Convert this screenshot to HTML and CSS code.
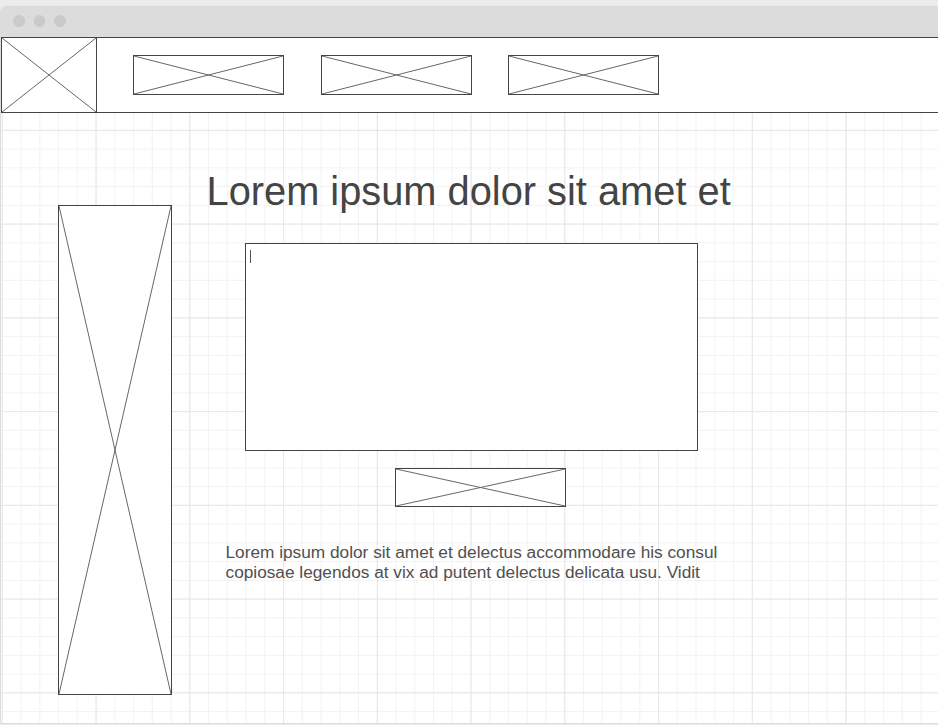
FILE: index.html
```html
<!DOCTYPE html>
<html lang="en">
<head>
<meta charset="utf-8">
<title>Wireframe</title>
<link rel="stylesheet" href="styles.css">
</head>
<body>
<div class="window">
  <div class="chrome">
    <span class="dot"></span>
    <span class="dot"></span>
    <span class="dot"></span>
  </div>
  <header class="header">
    <div class="ph logo">
      <svg class="x" viewBox="0 0 100 100" preserveAspectRatio="none"><line x1="0" y1="0" x2="100" y2="100"/><line x1="100" y1="0" x2="0" y2="100"/></svg>
    </div>
    <nav class="nav">
      <div class="ph navbox"><svg class="x" viewBox="0 0 100 100" preserveAspectRatio="none"><line x1="0" y1="0" x2="100" y2="100"/><line x1="100" y1="0" x2="0" y2="100"/></svg></div>
      <div class="ph navbox"><svg class="x" viewBox="0 0 100 100" preserveAspectRatio="none"><line x1="0" y1="0" x2="100" y2="100"/><line x1="100" y1="0" x2="0" y2="100"/></svg></div>
      <div class="ph navbox"><svg class="x" viewBox="0 0 100 100" preserveAspectRatio="none"><line x1="0" y1="0" x2="100" y2="100"/><line x1="100" y1="0" x2="0" y2="100"/></svg></div>
    </nav>
  </header>
  <main class="main">
    <aside class="ph sidebar">
      <svg class="x" viewBox="0 0 100 100" preserveAspectRatio="none"><line x1="0" y1="0" x2="100" y2="100"/><line x1="100" y1="0" x2="0" y2="100"/></svg>
    </aside>
    <section class="content">
      <h1 class="title">Lorem ipsum dolor sit amet et</h1>
      <div class="textarea"><span class="caret"></span></div>
      <div class="ph button"><svg class="x" viewBox="0 0 100 100" preserveAspectRatio="none"><line x1="0" y1="0" x2="100" y2="100"/><line x1="100" y1="0" x2="0" y2="100"/></svg></div>
      <p class="para">Lorem ipsum dolor sit amet et delectus accommodare his consul<br>copiosae legendos at vix ad putent delectus delicata usu. Vidit</p>
    </section>
  </main>
</div>
</body>
</html>
```

FILE: styles.css
```css
html, body {
  margin: 0;
  padding: 0;
}
body {
  background: #ececec;
  padding-top: 6px;
  font-family: "Liberation Sans", Arial, sans-serif;
  overflow: hidden;
}
.window {
  border-left: 1px solid #dcdcdc;
  border-bottom: 1px solid #dcdcdc;
  border-radius: 5px 0 0 0;
  background: #fff;
  height: 718px;
  display: flex;
  flex-direction: column;
  box-sizing: border-box;
}
.chrome {
  height: 31px;
  flex: none;
  background: #dcdcdc;
  border-radius: 5px 0 0 0;
  display: flex;
  align-items: flex-start;
  padding: 9px 0 0 12px;
  gap: 9px;
  box-sizing: border-box;
}
.dot {
  width: 11.5px;
  height: 11.5px;
  border-radius: 50%;
  background: #cacaca;
}
.header {
  flex: none;
  height: 76px;
  box-sizing: border-box;
  border-top: 1px solid #444;
  border-bottom: 1px solid #444;
  background: #fff;
  display: flex;
  align-items: center;
}
.ph {
  box-sizing: border-box;
  border: 1px solid #444;
  background: #fff;
  display: flex;
}
.x {
  width: 100%;
  height: 100%;
  display: block;
}
.x line {
  stroke: #666;
  stroke-width: 1;
  vector-effect: non-scaling-stroke;
}
.logo {
  width: 96px;
  height: 100%;
  border-top: none;
  border-bottom: none;
}
.nav {
  display: flex;
  gap: 36.5px;
  margin-left: 36px;
}
.navbox {
  width: 151px;
  height: 40px;
}
.main {
  flex: 1;
  display: flex;
  align-items: flex-start;
  padding-left: 57px;
  background-color: #fff;
  background-image:
    linear-gradient(to right, #e7e7e7 0, #e7e7e7 1px, transparent 1px),
    linear-gradient(to bottom, #e7e7e7 0, #e7e7e7 1px, transparent 1px),
    linear-gradient(to right, #f2f2f2 0, #f2f2f2 1px, transparent 1px),
    linear-gradient(to bottom, #f2f2f2 0, #f2f2f2 1px, transparent 1px);
  background-size: 93.75px 93.75px, 93.75px 93.75px, 18.75px 18.75px, 18.75px 18.75px;
  background-position: 0.8px 16.85px;
}
.sidebar {
  width: 114px;
  height: 490px;
  margin-top: 92px;
  flex: none;
}
.content {
  display: flex;
  flex-direction: column;
  align-items: flex-start;
  padding-top: 54px;
}
.title {
  margin: 0 0 0 34.5px;
  font-size: 39.8px;
  line-height: 48px;
  font-weight: normal;
  color: #444;
  white-space: nowrap;
}
.textarea {
  margin: 28px 0 0 73px;
  width: 453px;
  height: 208px;
  box-sizing: border-box;
  border: 1px solid #444;
  background: #fff;
  padding: 6px 4px;
}
.caret {
  display: block;
  width: 1px;
  height: 13px;
  background: #555;
}
.button {
  margin: 17px 0 0 223px;
  width: 171px;
  height: 39px;
}
.para {
  margin: 36px 0 0 53.5px;
  font-size: 17.25px;
  line-height: 19.5px;
  color: #505050;
  white-space: nowrap;
}
```
